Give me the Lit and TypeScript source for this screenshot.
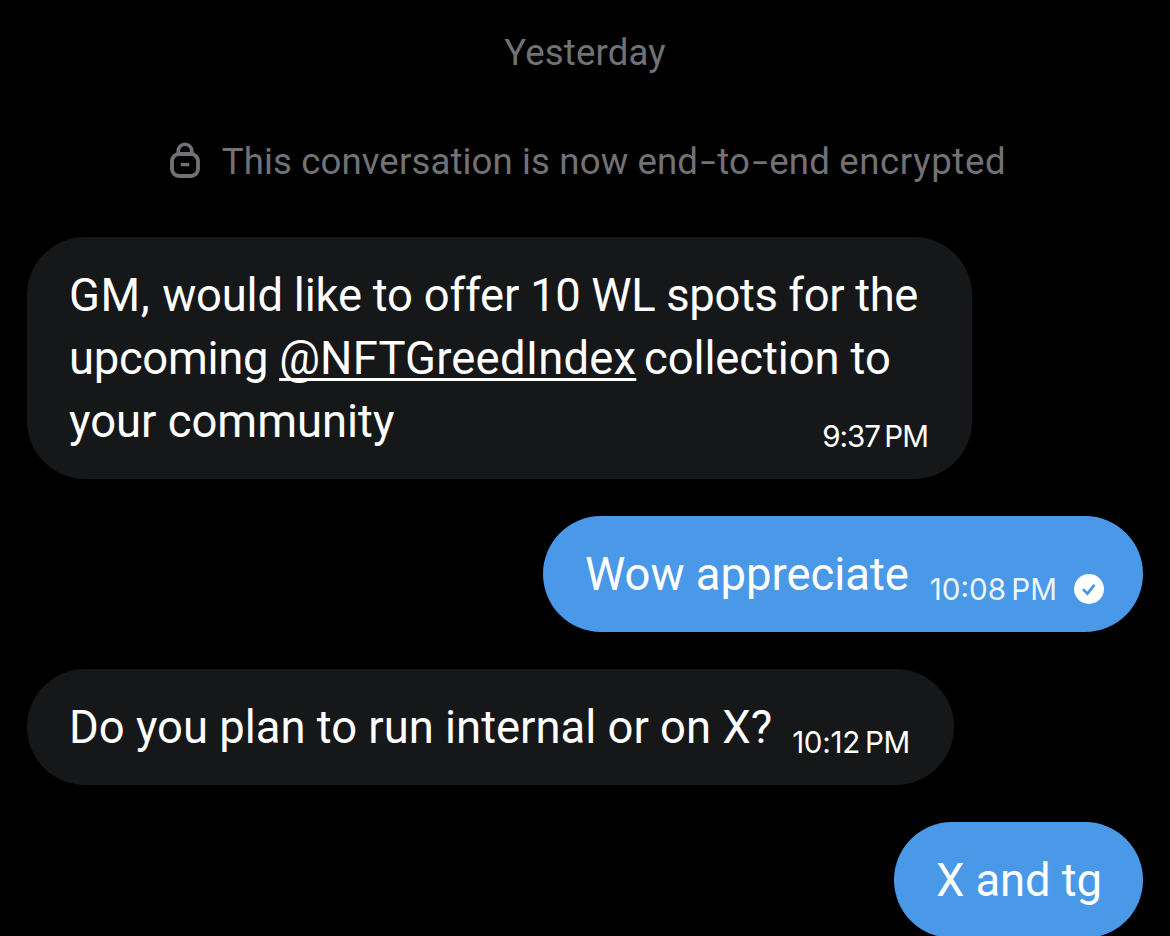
import { LitElement, css, html, nothing } from "lit";
import { customElement, property } from "lit/decorators.js";
import { classMap } from "lit/directives/class-map.js";
import { styleMap } from "lit/directives/style-map.js";

interface Segment {
  text: string;
  tracking?: number;
  mention?: boolean;
}

interface Message {
  lines: Segment[][];
  width: number;
  own?: boolean;
  time?: string;
  timeTracking?: number;
  sent?: boolean;
}

const MESSAGES: Message[] = [
  {
    width: 945,
    time: "9:37 PM",
    timeTracking: -1,
    lines: [
      [
        { text: "GM, ", tracking: 0.6 },
        { text: "would like to offer ", tracking: -0.2 },
        { text: "10 WL spots for the", tracking: -0.37 },
      ],
      [
        { text: "upcoming ", tracking: -0.3 },
        { text: "@NFTGreedIndex", tracking: 0.2, mention: true },
        { text: " ", tracking: -3.5 },
        { text: "collection to", tracking: -0.1 },
      ],
      [{ text: "your community" }],
    ],
  },
  {
    width: 600,
    own: true,
    time: "10:08 PM",
    timeTracking: 0,
    sent: true,
    lines: [[{ text: "Wow appreciate" }]],
  },
  {
    width: 927,
    time: "10:12 PM",
    timeTracking: -0.3,
    lines: [[{ text: "Do you plan to run internal or on X?" }]],
  },
  {
    width: 249,
    own: true,
    lines: [[{ text: "X and tg", tracking: -0.1 }]],
  },
];

@customElement("chat-bubble")
export class ChatBubble extends LitElement {
  static styles = css`
    :host {
      display: flex;
    }
    .bubble {
      display: flex;
      align-items: flex-end;
      box-sizing: border-box;
      min-height: 116px;
      padding: 26.6px 44px 25.5px 42px;
      border-radius: 58px;
      background: #161719;
      color: #fff;
    }
    .own {
      margin-left: auto;
      padding-right: 39px;
      background: #4a99e9;
    }
    .text {
      flex: 1;
      min-width: 0;
    }
    .line {
      font-size: 45.4px;
      line-height: 63.3px;
      white-space: pre;
    }
    .mention {
      text-decoration: underline;
      text-decoration-thickness: 3px;
      text-decoration-skip-ink: none;
      text-underline-offset: 4px;
    }
    .meta {
      display: flex;
      flex: none;
      align-items: center;
      gap: 17px;
      height: 30px;
      margin-bottom: 2.5px;
    }
    .time {
      font-family: Inter, "Liberation Sans", sans-serif;
      font-size: 29.6px;
      line-height: 30px;
      white-space: nowrap;
      word-spacing: -3px;
    }
    .own .time {
      color: #edf5fd;
    }
    .check {
      display: block;
      width: 30px;
      height: 30px;
    }
  `;

  @property({ type: Object })
  message!: Message;

  private _segment(segment: Segment) {
    return html`<span
      class=${classMap({ mention: segment.mention === true })}
      style=${styleMap({ letterSpacing: `${segment.tracking ?? 0}px` })}
      >${segment.text}</span
    >`;
  }

  private _meta() {
    const { time, timeTracking, sent } = this.message;
    if (time === undefined) {
      return nothing;
    }
    return html`<div class="meta">
      <span class="time" style=${styleMap({ letterSpacing: `${timeTracking ?? 0}px` })}>${time}</span>
      ${sent
        ? html`<svg class="check" viewBox="0 0 30 30">
            <circle cx="15" cy="15" r="15" fill="#fff" />
            <path
              d="M9.8 16l3.6 3.7 6.4-8"
              fill="none"
              stroke="#4a99e9"
              stroke-width="2.8"
              stroke-linecap="round"
            />
          </svg>`
        : nothing}
    </div>`;
  }

  render() {
    const { lines, width, own } = this.message;
    return html`<div
      class=${classMap({ bubble: true, own: own === true })}
      style=${styleMap({ width: `${width}px` })}
    >
      <div class="text">
        ${lines.map((line) => html`<div class="line">${line.map((s) => this._segment(s))}</div>`)}
      </div>
      ${this._meta()}
    </div>`;
  }
}

@customElement("app-root")
export class AppRoot extends LitElement {
  static styles = css`
    :host {
      display: block;
      box-sizing: border-box;
      height: 936px;
      padding: 31px 27px 0;
      overflow: hidden;
      background: #000;
      font-family: Roboto, "Liberation Sans", sans-serif;
    }
    .day,
    .notice {
      color: #717276;
      font-size: 36.6px;
      line-height: 44px;
    }
    .day {
      text-align: center;
      letter-spacing: 0.17px;
    }
    .notice {
      display: flex;
      justify-content: center;
      gap: 21px;
      margin-top: 65px;
      padding-left: 5px;
      letter-spacing: 0.13px;
      white-space: nowrap;
    }
    .hyphen {
      display: inline-block;
      margin: 0 4.5px;
      transform: scaleX(1.5);
    }
    .last {
      letter-spacing: 0.65px;
    }
    .lock {
      width: 32px;
      height: 38px;
      margin-top: 1px;
    }
    .messages {
      display: flex;
      flex-direction: column;
      gap: 37px;
      margin-top: 53px;
    }
  `;

  render() {
    const hyphen = html`<span class="hyphen">-</span>`;
    return html`
      <div class="day">Yesterday</div>
      <div class="notice">
        <svg class="lock" viewBox="0 0 32 38" fill="none" stroke="currentColor">
          <rect x="3" y="13" width="26" height="22" rx="7" stroke-width="3.8" />
          <path d="M9.2 13v-2.9a6.8 6.8 0 0 1 13.6 0V13" stroke-width="3.6" />
          <path d="M11.8 23.6h8.4" stroke-width="3.4" />
        </svg>
        <span
          >This conversation is now end${hyphen}to${hyphen}end <span class="last">encrypted</span></span
        >
      </div>
      <div class="messages">
        ${MESSAGES.map((m) => html`<chat-bubble .message=${m}></chat-bubble>`)}
      </div>
    `;
  }
}

declare global {
  interface HTMLElementTagNameMap {
    "app-root": AppRoot;
    "chat-bubble": ChatBubble;
  }
}
